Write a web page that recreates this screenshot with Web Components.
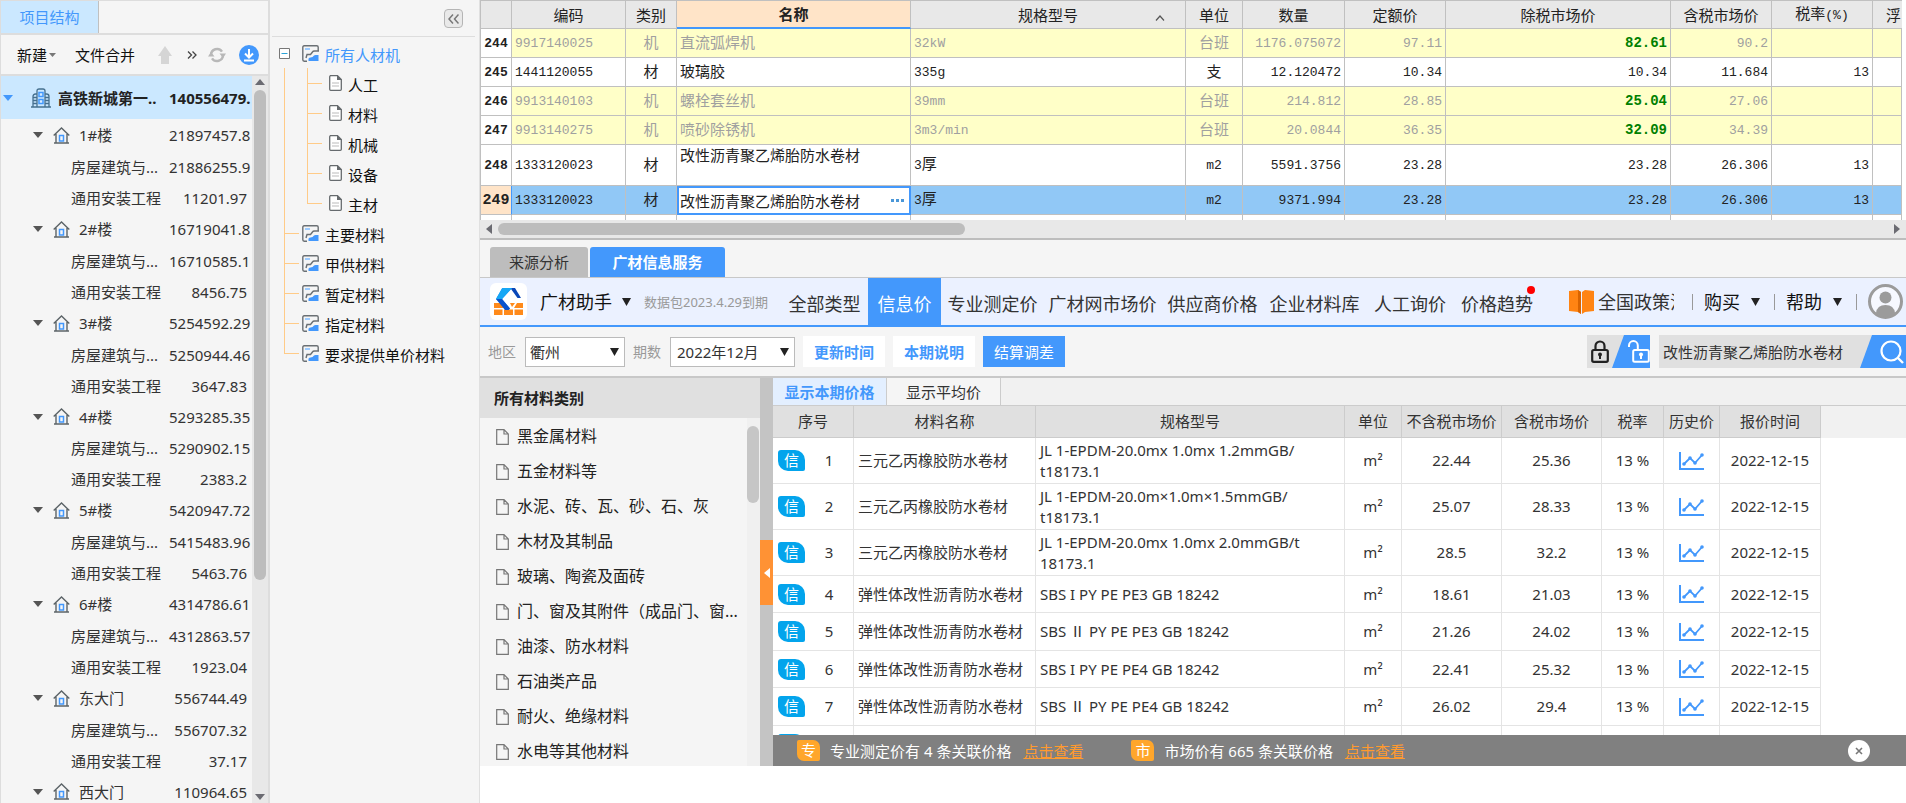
<!DOCTYPE html>
<html lang="zh-CN">
<head>
<meta charset="utf-8">
<title>广材信息服务</title>
<style>
  body { margin: 0; background: #fff; color: #333; font: 15px/20px "Noto Sans", "Noto Sans CJK SC", sans-serif; }
</style>
</head>
<body>
<app-shell>
  <project-panel slot="project"></project-panel>
  <resource-panel slot="resource"></resource-panel>
  <cost-grid slot="grid"></cost-grid>
  <price-helper slot="helper">
    <helper-nav slot="nav"></helper-nav>
    <filter-bar slot="filter"></filter-bar>
    <category-list slot="side"></category-list>
    <price-table slot="main"></price-table>
    <related-bar slot="main"></related-bar>
  </price-helper>
</app-shell>

<script>
const BASE = `
  :host, *, *::before, *::after { box-sizing: border-box; }
  ul { list-style: none; margin: 0; padding: 0; }
  button, input, select { font: inherit; color: inherit; border: 0; background: none; padding: 0; margin: 0; border-radius: 0; }
  a { color: inherit; text-decoration: none; }
  table { border-spacing: 0; table-layout: fixed; }
  th, td { padding: 0; font-weight: 400; white-space: nowrap; }
`;

function define(name, css, html) {
  customElements.define(name, class extends HTMLElement {
    constructor() {
      super();
      this.attachShadow({ mode: 'open' });
      this.shadowRoot.innerHTML = `<style>${BASE}${css}</style>${html}`;
    }
  });
}

/* ---------- icons ---------- */
const ICONS = {
  down: [10, 6, '<path d="M0 0h10L5 6z" fill="currentColor"/>'],
  drop: [9, 8, '<path d="M0 0h9L4.500 8z" fill="#222"/>'],
  caret: [7, 4, '<path d="M0 0h7L3.500 4z" fill="#777"/>'],
  up: [10, 6, '<path d="M0 6h10L5 0z" fill="#6b6b72"/>'],
  left: [6, 10, '<path d="M6 0v10L0 5z" fill="currentColor"/>'],
  right: [6, 10, '<path d="M0 0v10L6 5z" fill="#6b6b72"/>'],
  raise: [14, 18, '<path d="M7 0L14 10h-3v8H3v-8H0z" fill="#d5d5d5"/>'],
  more: [10, 8, '<path d="M1 .5L4.500 4L1 7.500M5.500 .5L9 4L5.500 7.500" fill="none" stroke="#444" stroke-width="1.300"/>'],
  less: [11, 10, '<path d="M5 .5L1 5l4 4.500M10.500 .5L6.500 5l4 4.500" fill="none" stroke="#777" stroke-width="1.500"/>'],
  refresh: [18, 16, '<path d="M3 8a6 6 0 0 1 11-3.300M15 8a6 6 0 0 1-11 3.300" fill="none" stroke="#b8b8b8" stroke-width="2.400"/><path d="M11.500 6.500h6.500l-3 4.500zM0 9.500h6.500L3 5z" fill="#b8b8b8"/>'],
  download: [20, 20, '<circle cx="10" cy="10" r="10" fill="#4398fc"/><path d="M10 4v8M6 8.500l4 4 4-4M5 15.500h10" fill="none" stroke="#fff" stroke-width="2"/>'],
  building: [20, 20, '<path d="M6 19V3q0-2 2-2h4q2 0 2 2v16M6 6H4.500Q2 6 2 8.500V19M14 6h1.500Q18 6 18 8.500V19M0 19h20M2 9.500h4M2 12.500h4M2 15.500h4M14 9.500h4M14 12.500h4M14 15.500h4" fill="none" stroke="#46708f" stroke-width="1.300"/><path d="M8 4.500h4v4H8zM8 11.500h4v4H8z" fill="#d9ecff" stroke="#4398fc" stroke-width="1.500"/>'],
  home: [17, 17, '<path d="M.7 8.500L8.500 1l7.800 7.500M3 7v9M14 7v9M1 16h15" fill="none" stroke="#5c6468" stroke-width="1.400"/><path d="M6.500 8.500h4V14h-4z" fill="none" stroke="#4398fc" stroke-width="1.500"/>'],
  minus: [11, 11, '<path d="M.5 .5h10v10H.5z" fill="#fff" stroke="#777"/><path d="M2.500 5.500h6" stroke="#2aa3d8"/>'],
  sheet: [17, 17, '<path d="M16.200 6V2.200q0-1.400-1.400-1.400H2.200Q.8 .8 .8 2.200v12.600q0 1.400 1.400 1.400H5M4 13l1-3.500h3.500L10.500 7q.5-1 2-1H17" fill="none" stroke="#6b7074" stroke-width="1.400"/><path d="M3 4h5" stroke="#9ccbff" stroke-width="2"/><path d="M6.500 16v-2q0-1 1-1.300l3-.7 1.500-1.500q.5-.5 1.500-.5H16.500V16z" fill="#4398fc"/>'],
  page: [13, 16, '<path d="M1 .7h7.500L12.300 4.500V14.300q0 1-1 1H1.700q-1 0-1-1V1.700q0-1 1-1z" fill="#fff" stroke="#666b6e" stroke-width="1.300"/><path d="M8 0l5 5H8z" fill="#666b6e"/><path d="M3 8h7M3 11h7" stroke="#bbb"/>'],
  file: [13, 16, '<path d="M.7 .7h7.300L12.300 5v10.300H.7zM8 .7V5h4" fill="none" stroke="#777" stroke-width="1.200"/>'],
  sort: [10, 6, '<path d="M1 5.500L5 1l4 4.500" fill="none" stroke="#555" stroke-width="1.200"/>'],
  logo: [37, 37, '<rect width="37" height="37" rx="6" fill="#fff"/><path d="M4 20h7l5 5H4zM4 26.500h8.500V32H4zM14 26.500h9V32h-9zM24.500 26.500H33V32h-8.500zM20 20h5l-3 4zM27 20h6v5H24z" fill="#ff8a1a"/><path d="M21 5h4l6 10h-3.500L21 6z" fill="#0a47b8"/><path d="M22 5L12 16l8 9.500-1.500 1.500L6 16l6-10.500q.3-.5 1-.5z" fill="#157df2"/><path d="M6 16l6-10.500q.3-.5 1-.5h9L12 16z" fill="#16a7f5"/><path d="M6 16h6l8 9.500-1.500 1.500H15z" fill="#0a52cc"/>'],
  book: [25, 24, '<path d="M0 1l9-1 3 2v22l-3-2-9-1z" fill="#ff8413"/><path d="M25 1l-9-1-3 2v22l3-2 9-1z" fill="#ff8413"/><path d="M9 0l3 2v22l-3-2z" fill="#d96400"/>'],
  user: [35, 35, '<circle cx="17.500" cy="17.500" r="16" fill="#f6f8ff" stroke="#9b9b9b" stroke-width="3"/><circle cx="17.500" cy="13.500" r="6" fill="#9b9b9b"/><path d="M8 29q1-8 9.500-8t9.500 8q-4 4-9.500 4T8 29z" fill="#9b9b9b"/>'],
  lock: [18, 23, '<rect x="1.200" y="10" width="15.600" height="11.800" rx="1.500" fill="none" stroke="#222" stroke-width="2.200"/><path d="M4.500 10V6a4.500 4.500 0 0 1 9 0v4" fill="none" stroke="#222" stroke-width="2.200"/><circle cx="9" cy="14.500" r="2" fill="#222"/><path d="M8 15h2v4H8z" fill="#222"/>'],
  unlock: [22, 23, '<rect x="5.200" y="10" width="15.600" height="11.800" rx="1.500" fill="none" stroke="#fff" stroke-width="2"/><path d="M1 7V5.500a4.400 4.400 0 0 1 8.800 0V10" fill="none" stroke="#fff" stroke-width="2"/><circle cx="13" cy="14.500" r="2" fill="#fff"/><path d="M12 15h2v4h-2z" fill="#fff"/>'],
  search: [24, 24, '<circle cx="11" cy="11" r="9.500" fill="none" stroke="#fff" stroke-width="2.200"/><path d="M17.500 17.500L23 23" stroke="#fff" stroke-width="2.400"/>'],
  chart: [25, 18, '<path d="M1 0v17h24" fill="none" stroke="#4398fc" stroke-width="2"/><path d="M5 12l6-6 5 5 7-8" fill="none" stroke="#4398fc" stroke-width="1.800"/><g fill="#4398fc"><circle cx="5" cy="12" r="1.800"/><circle cx="11" cy="6" r="1.800"/><circle cx="16" cy="11" r="1.800"/><circle cx="23" cy="3" r="1.800"/></g>'],
  cross: [8, 8, '<path d="M1 1l6 6M7 1L1 7" stroke="#777" stroke-width="1.600"/>'],
  dots: [14, 3, '<path d="M0 0h3v3H0zM5 0h3v3H5zM10 0h3v3h-3z" fill="#4a97d8"/>'],
};
customElements.define('ui-icon', class extends HTMLElement {
  connectedCallback() {
    if (this.shadowRoot) return;
    const [w, h, body] = ICONS[this.getAttribute('name')];
    this.attachShadow({ mode: 'open' }).innerHTML =
      `<style>:host{display:block;flex:none;line-height:0}svg{display:block}</style>
       <svg width="${w}" height="${h}" viewBox="0 0 ${w} ${h}" aria-hidden="true">${body}</svg>`;
  }
});

/* ---------- page frame ---------- */
define('app-shell', `
  :host { display: flex; height: 100vh; overflow: hidden; }
  .left { flex: none; width: 270px; }
  .mid { flex: none; width: 210px; }
  .right { flex: 1; min-width: 0; display: flex; flex-direction: column; }
`, `
  <div class="left"><slot name="project"></slot></div>
  <div class="mid"><slot name="resource"></slot></div>
  <main class="right"><slot name="grid"></slot><slot name="helper"></slot></main>
`);

/* ---------- project structure ---------- */
const PROJECT = [
  ['1#楼', '21897457.8', '21886255.9', '11201.97'],
  ['2#楼', '16719041.8', '16710585.1', '8456.75'],
  ['3#楼', '5254592.29', '5250944.46', '3647.83'],
  ['4#楼', '5293285.35', '5290902.15', '2383.2'],
  ['5#楼', '5420947.72', '5415483.96', '5463.76'],
  ['6#楼', '4314786.61', '4312863.57', '1923.04'],
  ['东大门', '556744.49', '556707.32', '37.17'],
  ['西大门', '110964.65'],
];
define('project-panel', `
  :host { display: flex; flex-direction: column; height: 100%; background: #f5f5f5; border-left: 1px solid #ddd; border-right: 2px solid #ddd; }
  .tabs { display: flex; height: 35px; flex: none; border-top: 1px solid #ddd; border-bottom: 2px solid #ddd; }
  .tabs button { width: 98px; background: #cbe8ff; color: #4398fc; border-right: 1px solid #c0c0c0; }
  .tools { display: flex; align-items: center; height: 41px; flex: none; padding: 0 8px 0 16px; border-bottom: 2px solid #ddd; color: #111; }
  .tools button { display: flex; align-items: center; gap: 2px; }
  .merge { margin: 0 23px 0 19px; } .more { margin: 0 11px 0 15px; } .ref { margin-right: 13px; }
  .body { flex: 1; min-height: 0; display: flex; overflow: hidden; }
  .tree { flex: 1; min-width: 0; overflow: hidden; }
  .row { display: flex; align-items: center; height: 31px; }
  .row span { white-space: nowrap; }
  .name { flex: 1; }
  .val { width: 83px; padding-right: 5px; text-align: right; }
  .root { height: 43px; background: #cbe8ff; font-weight: 700; color: #222; padding-left: 2px; }
  .root ui-icon:first-child { color: #4398fc; margin-right: 18px; }
  .root ui-icon + ui-icon { margin-right: 7px; }
  .unit { height: 32px; padding-left: 32px; }
  .unit ui-icon:first-child { color: #555; margin-right: 10px; }
  .unit ui-icon + ui-icon { margin-right: 9px; }
  li:nth-child(4n) .unit { height: 31px; }
  .leaf { padding-left: 70px; }
  .bar { width: 16px; background: #e8e8e8; display: flex; flex-direction: column; align-items: center; padding: 3px 0; }
  .thumb { width: 12px; flex: 0 0 68%; margin-top: 5px; border-radius: 6px; background: #bdbdbd; }
  .bar ui-icon:last-child { margin-top: auto; color: #6b6b72; }
`, `
  <div class="tabs"><button>项目结构</button></div>
  <div class="tools">
    <button>新建<ui-icon name="caret"></ui-icon></button>
    <button class="merge">文件合并</button>
    <button aria-label="上移"><ui-icon name="raise"></ui-icon></button>
    <button class="more" aria-label="更多"><ui-icon name="more"></ui-icon></button>
    <button class="ref" aria-label="刷新"><ui-icon name="refresh"></ui-icon></button>
    <button aria-label="下载"><ui-icon name="download"></ui-icon></button>
  </div>
  <div class="body">
    <div class="tree">
      <div class="row root"><ui-icon name="down"></ui-icon><ui-icon name="building"></ui-icon><span class="name">高铁新城第一..</span><span class="val">140556479.</span></div>
      <ul>${PROJECT.map(([n, v, a, b]) => `<li>
        <div class="row unit"><ui-icon name="down"></ui-icon><ui-icon name="home"></ui-icon><span class="name">${n}</span><span class="val">${v}</span></div>
        ${a ? `<div class="row leaf"><span class="name">房屋建筑与...</span><span class="val">${a}</span></div>
        <div class="row leaf"><span class="name">通用安装工程</span><span class="val">${b}</span></div>` : ''}</li>`).join('')}</ul>
    </div>
    <div class="bar"><ui-icon name="up"></ui-icon><div class="thumb"></div><ui-icon name="down"></ui-icon></div>
  </div>
`);

/* ---------- resource tree ---------- */
define('resource-panel', `
  :host { display: block; height: 100%; background: #f5f5f5; border-right: 1px solid #e0e0e0; color: #111; }
  .top { height: 37px; margin: 0 4px 0 2px; padding: 9px 12px 0 0; border-bottom: 1px solid #ddd; display: flex; justify-content: flex-end; }
  .top button { width: 19px; height: 19px; border: 1px solid #b5b5b5; border-radius: 4px; background: #e9e9e9; display: flex; align-items: center; justify-content: center; }
  .row { display: flex; align-items: center; height: 30px; padding-left: 14px; white-space: nowrap; }
  .row span { padding-top: 3px; margin-left: 6px; }
  .row i { height: 30px; width: 15px; margin-right: 3px; --l: #ffcb88;
    background: linear-gradient(var(--l), var(--l)) 0 0 / 1px 100% no-repeat, linear-gradient(var(--l), var(--l)) 0 15px / 15px 1px no-repeat; }
  .row i.v { width: 23px; margin: 0; background: linear-gradient(var(--l), var(--l)) 0 0 / 1px 100% no-repeat; }
  .row i.end { background-size: 1px 15px, 15px 1px; }
  .sub i + i { margin-right: 7px; }
  .head { padding-left: 9px; margin-top: 1px; color: #4398fc; }
  .head ui-icon + ui-icon { margin-left: 12px; }
`, `
  <div class="top"><button aria-label="收起"><ui-icon name="less"></ui-icon></button></div>
  <div class="row head"><ui-icon name="minus"></ui-icon><ui-icon name="sheet"></ui-icon><span>所有人材机</span></div>
  <ul>
    ${['人工', '材料', '机械', '设备', '主材'].map((t, i) => `<li class="row sub"><i class="v"></i><i class="${i === 4 ? 'end' : ''}"></i><ui-icon name="page"></ui-icon><span>${t}</span></li>`).join('')}
    ${['主要材料', '甲供材料', '暂定材料', '指定材料', '要求提供单价材料'].map((t, i) => `<li class="row"><i class="${i === 4 ? 'end' : ''}"></i><ui-icon name="sheet"></ui-icon><span>${t}</span></li>`).join('')}
  </ul>
`);

/* ---------- cost grid ---------- */
const COST = [
  [244, '9917140025', '机', '直流弧焊机', '32kW', '台班', '1176.075072', '97.11', '82.61', '90.2', ''],
  [245, '1441120055', '材', '玻璃胶', '335g', '支', '12.120472', '10.34', '10.34', '11.684', '13'],
  [246, '9913140103', '机', '螺栓套丝机', '39mm', '台班', '214.812', '28.85', '25.04', '27.06', ''],
  [247, '9913140275', '机', '喷砂除锈机', '3m3/min', '台班', '20.0844', '36.35', '32.09', '34.39', ''],
  [248, '1333120023', '材', '改性沥青聚乙烯胎防水卷材', '3厚', 'm2', '5591.3756', '23.28', '23.28', '26.306', '13'],
  [249, '1333120023', '材', '改性沥青聚乙烯胎防水卷材', '3厚', 'm2', '9371.994', '23.28', '23.28', '26.306', '13'],
];
const mono = s => String(s).replace(/[\x20-\x7e]+/g, '<span class="m">$&</span>');
define('cost-grid', `
  :host { display: block; flex: none; background: #fff; border-bottom: 2px solid #bdbdbd; color: #222; }
  .wrap { margin-right: 4px; height: 220px; overflow: hidden; }
  .m { font-family: "Liberation Mono", monospace; font-size: 13px; }
  table { width: 100%; border-left: 1px solid #c0c0c0; border-top: 1px solid #c0c0c0; }
  th, td { height: 29px; line-height: 20px; border-right: 1px solid #c0c0c0; border-bottom: 1px solid #c0c0c0; overflow: hidden; text-align: right; padding: 0 3px 2px; vertical-align: middle; }
  thead th { height: 28px; background: #e8e8e8; text-align: center; position: relative; padding-bottom: 0; }
  thead th.on { background: #ffe4c8; font-weight: 700; border-bottom: 2px solid #4398fc; }
  thead th:last-child { text-align: left; padding-left: 13px; padding-right: 0; border-right: 0; }
  thead ui-icon { position: absolute; right: 20px; top: 14px; }
  td:nth-child(2), td:nth-child(4), td:nth-child(5) { text-align: left; }
  td:nth-child(3), td:nth-child(6) { text-align: center; }
  tbody th { font-weight: 700; text-align: center; padding: 0 0 2px; }
  .mach td { background: #ffffc8; color: #a0a0a0; }
  .mach td:nth-child(9) { color: #008000; font-weight: 700; }
  .mach td:nth-child(9) .m { font-size: 14px; }
  .tall > * { height: 41px; } .tall td:nth-child(4) { vertical-align: top; }
  .sel td { background: #91c8f6; }
  .sel th { background: #ffe4c8; border-right: 1px solid #4398fc; }
  .sel th .m { font-size: 15px; }
  .sel td.edit { background: #fff; border: 2px solid #4398fc; padding: 0 4px 0 1px; }
  .edit div { display: flex; align-items: center; }
  .edit input { flex: 1; min-width: 0; height: 22px; }
  .hbar { height: 18px; background: #e8e8e8; display: flex; align-items: center; padding: 0 6px; color: #6b6b72; }
  .thumb { width: 33%; height: 12px; border-radius: 6px; background: #bdbdbd; margin: 0 auto 0 6px; }
`, `
  <div class="wrap"><table>
    <colgroup>${[31, 114, 51, 234, 275, 57, 102, 101, 225, 101, 101].map(w => `<col style="width:${w}px">`).join('')}<col></colgroup>
    <thead><tr><th></th><th>编码</th><th>类别</th><th class="on">名称</th><th>规格型号<ui-icon name="sort"></ui-icon></th><th>单位</th><th>数量</th><th>定额价</th><th>除税市场价</th><th>含税市场价</th><th>${mono('税率(%)')}</th><th>浮</th></tr></thead>
    <tbody>${COST.map(r => `<tr class="${r[2] === '机' ? 'mach' : r[0] === 248 ? 'tall' : r[0] === 249 ? 'sel' : ''}"><th>${mono(r[0])}</th>${r.slice(1).map((c, i) =>
      r[0] === 249 && i === 2 ? `<td class="edit"><div><input aria-label="名称" value="${c}"><ui-icon name="dots"></ui-icon></div></td>` : `<td>${mono(c)}</td>`).join('')}<td></td></tr>`).join('')}
      <tr>${'<td></td>'.repeat(12)}</tr></tbody>
  </table></div>
  <div class="hbar"><ui-icon name="left"></ui-icon><div class="thumb"></div><ui-icon name="right"></ui-icon></div>
`);

/* ---------- price helper ---------- */
define('price-helper', `
  :host { display: flex; flex-direction: column; height: 526px; flex: none; background: #f5f5f5; }
  .tabs { display: flex; gap: 2px; height: 38px; flex: none; padding: 7px 0 0 10px; border-bottom: 1px solid #c8c8c8; }
  .tabs button { width: 98px; height: 30px; border-radius: 3px 3px 0 0; background: #bdbdbd; color: #333; }
  .tabs button.on { width: 135px; background: #4398fc; color: #fff; font-weight: 700; }
  .split { flex: 1; min-height: 0; display: flex; border-top: 2px solid #c8c8c8; }
  .side { flex: none; width: 280px; }
  .handle { flex: none; width: 13px; background: #c4c4c4; padding-top: 162px; }
  .handle button { width: 13px; height: 65px; background: #ff9234; color: #fff; display: flex; align-items: center; justify-content: center; }
  .main { flex: 1; min-width: 0; display: flex; flex-direction: column; background: #fff; }
`, `
  <div class="tabs"><button>来源分析</button><button class="on">广材信息服务</button></div>
  <slot name="nav"></slot><slot name="filter"></slot>
  <div class="split">
    <div class="side"><slot name="side"></slot></div>
    <div class="handle"><button aria-label="折叠"><ui-icon name="left"></ui-icon></button></div>
    <div class="main"><slot name="main"></slot></div>
  </div>
`);

define('helper-nav', `
  :host { display: flex; align-items: center; height: 49px; flex: none; background: #ebf1ff; border-bottom: 2px solid #4398fc; padding: 0 3px 0 10px; font-size: 18px; line-height: 24px; white-space: nowrap; }
  .app { display: flex; align-items: center; gap: 10px; margin-left: 13px; color: #111; }
  .pack { font-size: 13px; color: #999; margin-left: 13px; width: 137px; }
  nav { display: grid; grid-template-columns: 87px 73px 103px 117px 103px 101px 90px 84px; align-self: stretch; }
  nav a { display: flex; align-items: center; justify-content: center; padding-top: 4px; position: relative; }
  nav a.on { background: #4398fc; color: #fff; }
  nav a u { position: absolute; width: 8px; height: 8px; border-radius: 4px; background: #f00; right: 4px; top: 8px; }
  .policy { display: flex; align-items: center; gap: 4px; margin-left: auto; width: 105px; overflow: hidden; }
  .menu { display: flex; align-items: center; gap: 11px; color: #111; padding: 0 14px 0 11px; border-left: 1px solid #999; line-height: 16px; }
  .policy + .menu { margin-left: 18px; }
  .acc { border-left: 1px solid #999; height: 16px; width: 12px; }
`, `
  <ui-icon name="logo"></ui-icon>
  <button class="app">广材助手<ui-icon name="drop"></ui-icon></button>
  <span class="pack">数据包2023.4.29到期</span>
  <nav><a href="#">全部类型</a><a href="#" class="on">信息价</a><a href="#">专业测定价</a><a href="#">广材网市场价</a><a href="#">供应商价格</a><a href="#">企业材料库</a><a href="#">人工询价</a><a href="#">价格趋势<u></u></a></nav>
  <a class="policy" href="#"><ui-icon name="book"></ui-icon>全国政策法</a>
  <button class="menu">购买<ui-icon name="drop"></ui-icon></button>
  <button class="menu">帮助<ui-icon name="drop"></ui-icon></button>
  <span class="acc"></span><ui-icon name="user"></ui-icon>
`);

define('filter-bar', `
  :host { display: flex; align-items: center; height: 49px; flex: none; padding-left: 8px; white-space: nowrap; }
  label { font-size: 14px; color: #999; margin-right: 9px; }
  .pick { position: relative; margin-right: 8px; }
  .pick select { appearance: none; width: 100px; height: 30px; border: 1px solid #bbb; background: #fff; padding-left: 4px; }
  .pick.wide select { width: 125px; padding-left: 6px; }
  .pick ui-icon { position: absolute; right: 6px; top: 11px; pointer-events: none; }
  .btn { width: 82px; height: 31px; background: #fff; color: #4398fc; margin-right: 8px; font-weight: 700; }
  .btn.on { background: #4398fc; color: #fff; font-weight: 400; }
  .lock { margin-left: auto; display: flex; width: 63px; height: 33px; background: #e0e0e0; padding-left: 4px; align-items: center; justify-content: space-between; }
  .lock .open { width: 38px; height: 33px; display: flex; align-items: center; justify-content: flex-end; background: #4398fc; clip-path: polygon(12px 0, 100% 0, 100% 100%, 0 100%); }
  form { display: flex; width: 247px; height: 33px; margin-left: 9px; background: #e0e0e0; overflow: hidden; }
  form input { flex: 1; min-width: 0; padding-left: 4px; }
  form button { width: 46px; background: #4398fc; clip-path: polygon(12px 0, 100% 0, 100% 100%, 0 100%); display: flex; align-items: center; padding-left: 20px; }
`, `
  <label for="area">地区</label><span class="pick"><select id="area"><option>衢州</option></select><ui-icon name="drop"></ui-icon></span>
  <label for="term">期数</label><span class="pick wide"><select id="term"><option>2022年12月</option></select><ui-icon name="drop"></ui-icon></span>
  <button class="btn">更新时间</button><button class="btn">本期说明</button><button class="btn on">结算调差</button>
  <div class="lock"><button aria-label="锁定"><ui-icon name="lock"></ui-icon></button><button class="open" aria-label="解锁"><ui-icon name="unlock"></ui-icon></button></div>
  <form><input aria-label="搜索材料" value="改性沥青聚乙烯胎防水卷材"><button type="button" aria-label="搜索"><ui-icon name="search"></ui-icon></button></form>
`);

define('category-list', `
  :host { display: flex; flex-direction: column; height: 100%; background: #f5f5f5; color: #222; }
  h2 { margin: 0; height: 40px; flex: none; padding-left: 14px; font: 700 15px/40px "Noto Sans CJK SC", sans-serif; background: #e0e0e0; }
  .body { flex: 1; display: flex; min-height: 0; }
  ul { flex: 1; overflow: hidden; font-size: 16px; }
  li { display: flex; align-items: center; gap: 8px; height: 35px; padding-left: 16px; white-space: nowrap; }
  li ui-icon { padding-top: 2px; }
  .bar { width: 13px; background: #f0f0f0; padding: 8px 1px 0 0; }
  .thumb { width: 12px; height: 77px; border-radius: 6px; background: #c6c6c6; }
`, `
  <h2>所有材料类别</h2>
  <div class="body"><ul>${['黑金属材料', '五金材料等', '水泥、砖、瓦、砂、石、灰', '木材及其制品', '玻璃、陶瓷及面砖', '门、窗及其附件（成品门、窗...', '油漆、防水材料', '石油类产品', '耐火、绝缘材料', '水电等其他材料']
    .map(t => `<li><ui-icon name="file"></ui-icon>${t}</li>`).join('')}</ul><div class="bar"><div class="thumb"></div></div></div>
`);

const PRICES = [
  ['三元乙丙橡胶防水卷材', 'JL 1-EPDM-20.0mx 1.0mx 1.2mmGB/<br>t18173.1', '22.44', '25.36'],
  ['三元乙丙橡胶防水卷材', 'JL 1-EPDM-20.0m×1.0m×1.5mmGB/<br>t18173.1', '25.07', '28.33'],
  ['三元乙丙橡胶防水卷材', 'JL 1-EPDM-20.0mx 1.0mx 2.0mmGB/t<br>18173.1', '28.5', '32.2'],
  ['弹性体改性沥青防水卷材', 'SBS I PY PE PE3 GB 18242', '18.61', '21.03'],
  ['弹性体改性沥青防水卷材', 'SBS Ⅱ PY PE PE3 GB 18242', '21.26', '24.02'],
  ['弹性体改性沥青防水卷材', 'SBS I PY PE PE4 GB 18242', '22.41', '25.32'],
  ['弹性体改性沥青防水卷材', 'SBS Ⅱ PY PE PE4 GB 18242', '26.02', '29.4'],
];
define('price-table', `
  :host { display: flex; flex-direction: column; flex: 1; min-height: 0; overflow: hidden; }
  .tabs { display: flex; height: 28px; flex: none; background: #f1f1f1; border-bottom: 1px solid #ccc; }
  .tabs button { width: 114px; border-right: 1px solid #ccc; background: #f5f5f5; }
  .tabs button.on { background: #e3efff; color: #4398fc; font-weight: 700; }
  .data { flex: 1; min-height: 0; background: linear-gradient(#f1f1f1, #f1f1f1) 0 0 / 100% 32px no-repeat; }
  table { width: 1048px; line-height: 21px; }
  th { height: 32px; background: #e0e0e0; border-right: 1px solid #ccc; border-bottom: 1px solid #ccc; }
  td { height: 38px; border-right: 1px solid #e4e4e4; border-bottom: 1px solid #e4e4e4; text-align: center; }
  tr:nth-child(2n) td { height: 37px; }
  tr.two td { height: 46px; }
  td:nth-child(2), td:nth-child(3) { text-align: left; padding-left: 4px; }
  .no { display: flex; align-items: center; padding-left: 5px; }
  .no b { width: 27px; height: 21px; background: #03a4ec; color: #fff; font-weight: 400; border-radius: 3px 10px 2px 10px; }
  .no span { flex: 1; }
  ui-icon { display: flex; justify-content: center; }
`, `
  <div class="tabs"><button class="on">显示本期价格</button><button>显示平均价</button></div>
  <div class="data"><table>
    <colgroup>${[81, 182, 309, 57, 100, 100, 62, 56, 101].map(w => `<col style="width:${w}px">`).join('')}</colgroup>
    <thead><tr><th>序号</th><th>材料名称</th><th>规格型号</th><th>单位</th><th>不含税市场价</th><th>含税市场价</th><th>税率</th><th>历史价</th><th>报价时间</th></tr></thead>
    <tbody>${PRICES.map(([n, s, a, b], i) => `<tr class="${i < 3 ? 'two' : ''}"><td><div class="no"><b>信</b><span>${i + 1}</span></div></td><td>${n}</td><td>${s}</td><td>m²</td><td>${a}</td><td>${b}</td><td>13 %</td><td><ui-icon name="chart"></ui-icon></td><td>2022-12-15</td></tr>`).join('')}
    <tr><td><div class="no"><b></b></div></td>${'<td></td>'.repeat(8)}</tr></tbody>
  </table></div>
`);

define('related-bar', `
  :host { display: flex; align-items: center; height: 31px; flex: none; background: #808080; color: #fff; padding: 0 36px 0 24px; white-space: nowrap; }
  b { width: 23px; height: 21px; margin-right: 10px; background: #ffa62b; border-radius: 2px 7px 2px 7px; font-weight: 400; text-align: center; }
  a { color: #ff9a2e; text-decoration: underline; margin: 0 48px 0 12px; }
  button { margin-left: auto; width: 22px; height: 22px; border-radius: 50%; background: #fff; display: flex; align-items: center; justify-content: center; }
`, `
  <b>专</b><span>专业测定价有 4 条关联价格</span><a href="#">点击查看</a>
  <b>市</b><span>市场价有 665 条关联价格</span><a href="#">点击查看</a>
  <button aria-label="关闭"><ui-icon name="cross"></ui-icon></button>
`);
</script>
</body>
</html>
